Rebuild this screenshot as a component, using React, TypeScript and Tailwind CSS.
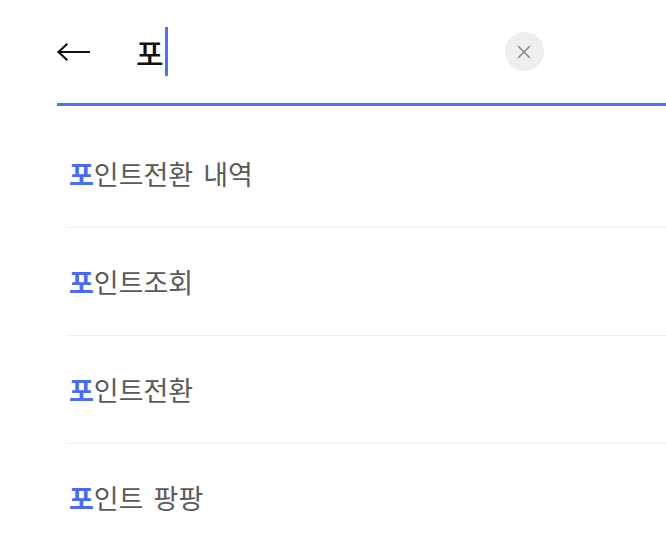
import React from "react";

const items = ["인트전환 내역", "인트조회", "인트전환", "인트 팡팡"];

export default function App() {
  return (
    <div
      className="w-[666px] h-[543px] overflow-hidden bg-white"
      style={{ fontFamily: '"Noto Sans CJK KR", "Noto Sans", sans-serif' }}
    >
      <div className="ml-[57px] h-[106px] border-b-[3px] border-[#4c74e6] flex items-center">
        <div className="flex items-center w-[33px] h-[20px]">
          <svg width="33" height="20" viewBox="0 0 33 20" fill="none">
            <path d="M1.5 10H32M9.5 2.5L1.5 10L9.5 17.5" stroke="#111" strokeWidth="2.2" strokeLinecap="square" />
          </svg>
        </div>
        <div className="ml-[46px] flex items-center h-[50px]">
          <span className="text-[30px] leading-none text-[#111] font-medium">포</span>
          <span className="ml-[1px] w-[3px] h-[49px] bg-[#4c74e6]" />
        </div>
        <div className="ml-[337px] w-[39px] h-[39px] rounded-full bg-[#eeeeee] flex items-center justify-center">
          <svg width="16" height="16" viewBox="0 0 16 16" fill="none">
            <path d="M2 2L14 14M14 2L2 14" stroke="#8a8a8a" strokeWidth="1.6" />
          </svg>
        </div>
      </div>
      <div className="pt-[14px] pl-[66px]">
        {items.map((t, i) => (
          <div
            key={i}
            className={`h-[108px] flex items-center pb-[1px] ${i < items.length - 1 ? "border-b border-[#eeeeee]" : ""}`}
          >
            <span className="text-[27px] leading-none text-[#5a5a5a] pl-[3px] [word-spacing:4px]">
              <span className="text-[#4a6cf0] font-semibold">포</span>
              {t}
            </span>
          </div>
        ))}
      </div>
    </div>
  );
}
